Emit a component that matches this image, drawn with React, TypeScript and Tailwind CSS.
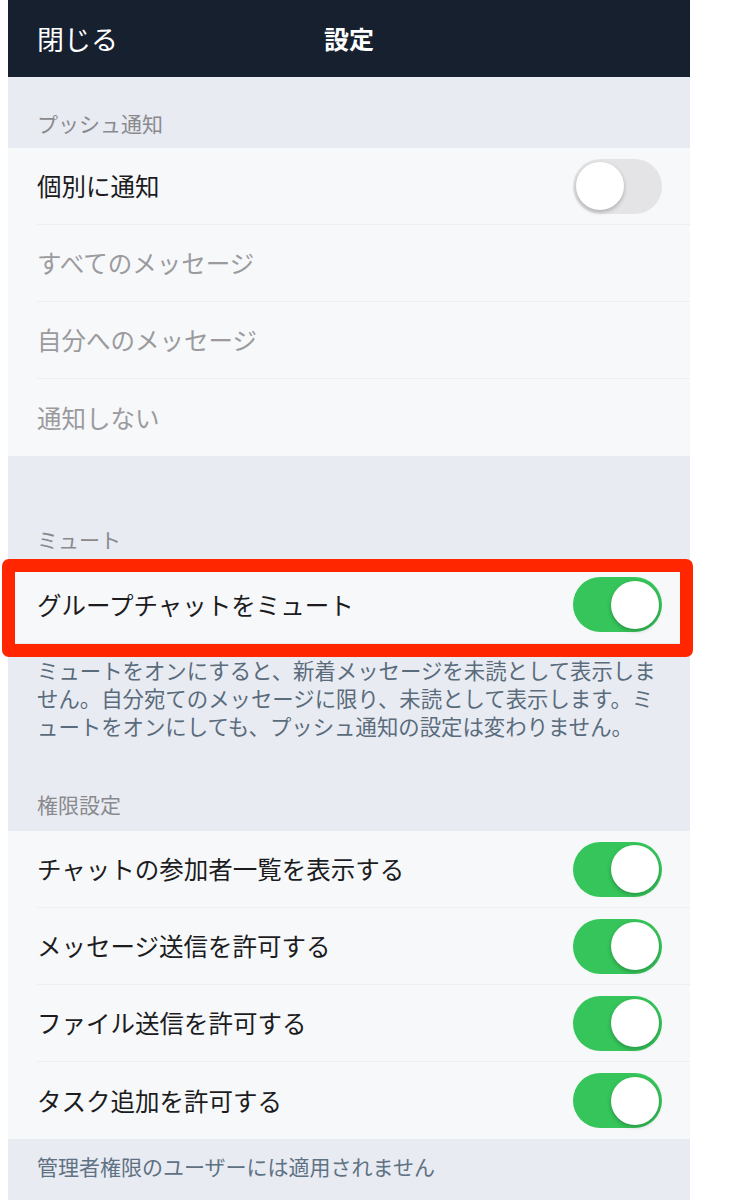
import type { ReactNode } from 'react';

const font = { fontFamily: '"Noto Sans CJK JP", "Noto Sans", sans-serif' };

function Toggle({ on }: { on: boolean }) {
  return (
    <div
      className={`relative h-[55px] w-[89px] shrink-0 rounded-full ${
        on ? 'bg-[#35c55a]' : 'bg-[#e4e4e7]'
      }`}
    >
      <div
        className={`absolute top-[3.5px] h-[48px] w-[48px] rounded-full bg-white shadow-[0_2px_4px_rgba(0,0,0,0.25)] ${
          on ? 'right-[3px]' : 'left-[3px]'
        }`}
      />
    </div>
  );
}

function Row({ label, dim, toggle, last }: { label: string; dim?: boolean; toggle?: boolean | null; last?: boolean }) {
  return (
    <div className="flex h-[77px] flex-col bg-[#f7f8fa]">
      <div className="flex flex-1 items-center justify-between pl-[29px] pr-[28px]">
        <span className={`text-[24.5px] leading-[32px] ${dim ? 'text-[#9b9b9e]' : 'text-[#1c1c1e]'}`}>{label}</span>
        {toggle !== undefined && toggle !== null && <Toggle on={toggle} />}
      </div>
      {!last && <div className="ml-[29px] h-px bg-[#eceef2]" />}
    </div>
  );
}

function SectionLabel({ children, className }: { children: ReactNode; className: string }) {
  return (
    <div className={`pl-[29px] text-[21px] leading-[28px] text-[#8a8a8e] ${className}`}>{children}</div>
  );
}

export default function App() {
  return (
    <div className="min-h-[1200px] bg-white" style={font}>
      <div className="ml-2 min-h-[1200px] w-[682px] bg-[#e8ebf2]">
        <header className="relative flex h-[77px] items-center bg-[#17202f] pl-[29px] text-white">
          <span className="text-[27px] leading-none">閉じる</span>
          <span className="absolute left-1/2 -translate-x-1/2 text-[25px] font-bold leading-none">設定</span>
        </header>

        <SectionLabel className="pt-[32px] pb-[11px]">プッシュ通知</SectionLabel>
        <Row label="個別に通知" toggle={false} />
        <Row label="すべてのメッセージ" dim />
        <Row label="自分へのメッセージ" dim />
        <Row label="通知しない" dim last />

        <SectionLabel className="pt-[69px] pb-[13px]">ミュート</SectionLabel>
        <div className="relative">
          <Row label="グループチャットをミュート" toggle={true} last />
          <div className="pointer-events-none absolute -left-[6px] -right-[3px] -top-[7px] -bottom-[14px] rounded-[7px] border-[13px] border-[#ff2600]" />
        </div>

        <p className="pl-[29px] pt-[13px] pb-[18px] text-[21.4px] leading-[28px] text-[#5a6b7c]">
          ミュートをオンにすると、新着メッセージを未読として表示しま
          <br />
          せん。自分宛てのメッセージに限り、未読として表示します。ミ
          <br />
          ュートをオンにしても、プッシュ通知の設定は変わりません。
        </p>

        <SectionLabel className="pt-[32px] pb-[13px]">権限設定</SectionLabel>
        <Row label="チャットの参加者一覧を表示する" toggle={true} />
        <Row label="メッセージ送信を許可する" toggle={true} />
        <Row label="ファイル送信を許可する" toggle={true} />
        <Row label="タスク追加を許可する" toggle={true} last />

        <div className="pl-[29px] pt-[13px] text-[21px] leading-[28px] text-[#5f7284]">
          管理者権限のユーザーには適用されません
        </div>
      </div>
    </div>
  );
}
